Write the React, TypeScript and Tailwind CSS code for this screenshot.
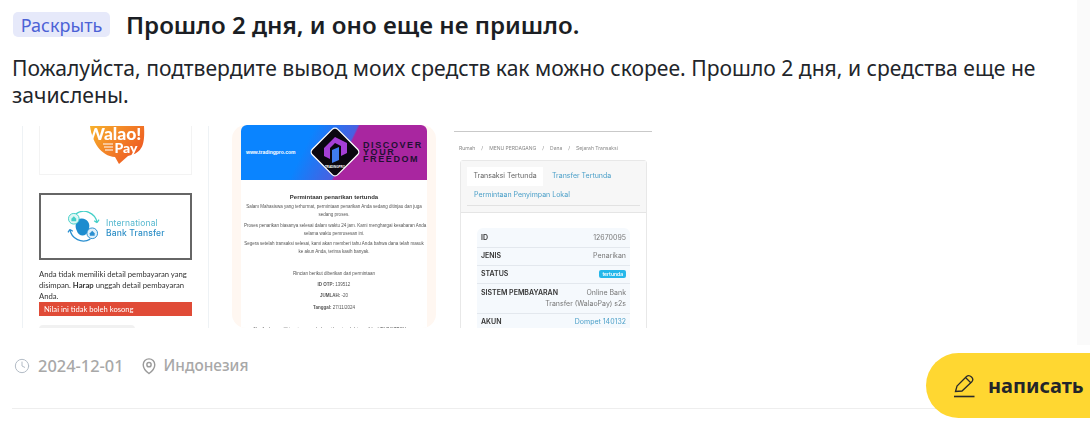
import React from 'react';
import { Clock } from 'lucide-react';

const sans = { fontFamily: '"Noto Sans", sans-serif' };

function WalaoTile() {
  return (
    <div className="w-[187px] h-[202px] shrink-0 overflow-hidden border-x border-[#eef2f5] px-[16px] font-['Lato']">
      <div className="h-[49px] border border-t-0 border-[#f3f3f3] flex justify-center overflow-hidden">
        <div className="relative w-[58px] h-[38px]">
          <svg viewBox="0 0 58 38" className="w-[58px] h-[38px]">
            <defs>
              <linearGradient id="walao" x1="0" y1="0" x2="1" y2="0.6">
                <stop offset="0" stopColor="#f7b12c" />
                <stop offset="1" stopColor="#ee5a22" />
              </linearGradient>
            </defs>
            <path d="M3 0 H57 C58 18 56 27 41 30 L32 38 L28 31 C14 30 5 16 3 0 Z" fill="url(#walao)" />
            <path d="M16 18 H26 M17 21 H26 M18 24 H26" stroke="#fff" strokeWidth="1.2" />
          </svg>
          <span className="absolute left-0 top-0 text-[17.5px] leading-[15px] font-black text-white whitespace-nowrap">Walao!</span>
          <span className="absolute left-[28px] top-[15px] text-[14px] leading-[13px] font-black text-white">Pay</span>
        </div>
      </div>
      <div className="mt-[18px] h-[67px] border-2 border-[#666] flex items-center pl-[26px] gap-[6px]">
        <svg viewBox="0 0 34 32" className="w-[33px] h-[31px]">
          <path d="M9 3 A14 14 0 0 1 31 12 M31 12 L28 10 M31 12 L33 9" fill="none" stroke="#45d0c8" strokeWidth="1.3" />
          <path d="M24 29 A14 14 0 0 1 3 19 M3 19 L1 22 M3 19 L6 21" fill="none" stroke="#2a8fd0" strokeWidth="1.3" />
          <path d="M11 9 C18 5 26 12 22 20 C20 27 12 27 10 20 C8 16 9 12 11 9 Z" fill="#1c8ccf" />
          <circle cx="7" cy="8" r="5.5" fill="#dff7f5" stroke="#45d0c8" />
          <path d="M4.5 8 L7 5.5 L9.5 8 V10.5 H4.5 Z" fill="#45d0c8" />
          <circle cx="26" cy="23" r="5.5" fill="#dff0fa" stroke="#2a8fd0" />
          <path d="M23.5 23 L26 20.5 L28.5 23 V25.5 H23.5 Z" fill="#2a8fd0" />
        </svg>
        <div className="mt-[2px] text-[8.5px] leading-[10px] tracking-[0.15px] whitespace-nowrap font-['Inter']">
          <div className="text-[#55b8cf]">International</div>
          <div className="font-medium text-[#2d8fc7]">Bank Transfer</div>
        </div>
      </div>
      <p className="mt-[9px] text-[7.7px] leading-[11px] text-[#333] whitespace-nowrap">
        Anda tidak memiliki detail pembayaran yang<br />
        disimpan. <span className="font-bold">Harap</span> unggah detail pembayaran<br />
        Anda.
      </p>
      <div className="h-[14px] bg-[#e04b37] text-white text-[7.6px] leading-[14px] pl-[5px]">Nilai ini tidak boleh kosong</div>
      <div className="mt-[9px] w-[96px] h-[8px] bg-[#f1f1f1] rounded-t" />
    </div>
  );
}

function EmailLine({ children, gap = 0 }: { children: React.ReactNode; gap?: number }) {
  return (
    <p className="text-center text-[#555] text-[4.5px] leading-[8px] whitespace-nowrap" style={{ marginTop: gap }}>
      {children}
    </p>
  );
}

function EmailTile() {
  return (
    <div className="w-[204px] h-[203px] shrink-0 overflow-hidden rounded-[14px] bg-[#fff7f1] px-[9px] ml-[23px] -mt-px font-['Liberation_Sans']">
      <div className="w-[186px] h-full bg-white rounded-t-[6px] overflow-hidden">
        <div className="relative h-[55px] flex items-center justify-between bg-[linear-gradient(116deg,#0a84ff_0%,#0a84ff_35%,#4a60e0_55%,#a926a0_56%,#a926a0_100%)] pl-[5px] pr-[4px]">
          <span className="text-[5px] font-bold text-white">www.tradingpro.com</span>
          <svg viewBox="0 0 54 54" className="absolute left-[67px] top-0 w-[54px] h-[54px]">
            <rect x="9" y="9" width="36" height="36" rx="4" transform="rotate(45 27 27)" fill="#0b0710" stroke="#fff" strokeWidth="1.3" />
            <path d="M16 23 L27 12 L39 18 V28 L33 31 V21 L27 18 L22 23 V34 L16 31 Z" fill="#a63fd6" />
            <path d="M24 25 L31 22 V35 L24 38 Z" fill="#3f7cf0" />
            <text x="27" y="42.5" textAnchor="middle" fontSize="3" fontWeight="700" fill="#fff">TRADINGPRO</text>
          </svg>
          <div className="w-[60px] text-[#221033] font-bold text-[9px] leading-[7px] tracking-[1.6px] whitespace-nowrap">
            <div>DISCOVER</div>
            <div>YOUR</div>
            <div>FREEDOM</div>
          </div>
        </div>
        <div className="px-[3px]">
          <p className="mt-[13px] text-center text-[6px] leading-[9px] font-bold text-[#333]">Permintaan penarikan tertunda</p>
          <EmailLine gap={1}>Salam Mahasiswa yang terhormat, permintaan penarikan Anda sedang ditinjau dan juga</EmailLine>
          <EmailLine>sedang proses.</EmailLine>
          <EmailLine gap={3}>Proses penarikan biasanya selesai dalam waktu 24 jam. Kami menghargai kesabaran Anda</EmailLine>
          <EmailLine>selama waktu pemrosesan ini.</EmailLine>
          <EmailLine gap={2}>Segera setelah transaksi selesai, kami akan memberi tahu Anda bahwa dana telah masuk</EmailLine>
          <EmailLine>ke akun Anda, terima kasih banyak.</EmailLine>
          <EmailLine gap={14}>Rincian berikut diberikan dari permintaan</EmailLine>
          <EmailLine gap={3}><b>ID OTP:</b> 139512</EmailLine>
          <EmailLine gap={3}><b>JUMLAH:</b> -20</EmailLine>
          <EmailLine gap={4}><b>Tanggal:</b> 27/11/2024</EmailLine>
          <EmailLine gap={14}>Jika Anda memiliki pertanyaan, hubungi kami melalui email ke HELP@TPGY.com</EmailLine>
        </div>
      </div>
    </div>
  );
}

function Row({ label, children, tall }: { label: string; children: React.ReactNode; tall?: boolean }) {
  if (tall) {
    return (
      <div className="h-[30px] px-[4px] pt-[3px] border-b border-[#e3e8ee] text-[7px] leading-[11px]">
        <span className="float-left font-semibold text-[#333] whitespace-nowrap">{label}</span>
        <div className="text-right text-[#777]">{children}</div>
      </div>
    );
  }
  return (
    <div className="flex h-[18px] items-center justify-between px-[4px] border-b border-[#e3e8ee] text-[7px]">
      <span className="font-semibold text-[#333] whitespace-nowrap">{label}</span>
      <div className="text-right text-[#777]">{children}</div>
    </div>
  );
}

function TransactionTile() {
  return (
    <div className="w-[198px] h-[202px] shrink-0 overflow-hidden ml-[18px] font-['Inter']">
      <div className="mt-[5px] h-px bg-[#c9c9c9]" />
      <div className="mt-[14px] pl-[5px] h-[6px] flex items-center gap-[6px] text-[5px] text-[#888] whitespace-nowrap">
        <span>Rumah</span><span>/</span><span>MENU PERDAGANG</span><span>/</span><span>Dana</span><span>/</span><span>Sejarah Transaksi</span>
      </div>
      <div className="mt-[8px] mx-[6px] w-[187px] border border-[#e8e8e8] rounded-t-[3px]">
        <div className="h-[52px] bg-[#f7f7f7] border-b border-[#e5e5e5] px-[6px] pt-[6px] text-[7px]">
          <div className="flex h-[19px]">
            <span className="w-[76px] bg-white text-[#666] flex items-center justify-center whitespace-nowrap">Transaksi Tertunda</span>
            <span className="ml-[9px] text-[#4a9fc8] flex items-center whitespace-nowrap">Transfer Tertunda</span>
          </div>
          <div className="h-[20px] border-b border-[#e2e2e2] text-[#4a9fc8] flex items-center pl-[7px] whitespace-nowrap">Permintaan Penyimpan Lokal</div>
        </div>
        <div className="mt-[15px] mx-[16px] bg-[#f5f9fd] rounded-t-[6px] overflow-hidden">
          <div className="h-[2px]" />
          <Row label="ID">12670095</Row>
          <Row label="JENIS">Penarikan</Row>
          <Row label="STATUS"><span className="bg-[#25b7ea] text-white text-[5px] px-[3px] py-[1px] rounded-[2px] font-semibold">tertunda</span></Row>
          <Row label="SISTEM PEMBAYARAN" tall>Online Bank Transfer (WalaoPay) s2s</Row>
          <Row label="AKUN"><span className="text-[#4a9fc8]">Dompet 140132</span></Row>
        </div>
      </div>
    </div>
  );
}

export default function App() {
  return (
    <div className="relative w-[1090px] h-[438px] bg-white overflow-hidden" style={sans}>
      {/* faint scrollbar track on the right edge */}
      <div className="absolute right-0 top-0 w-[13px] h-[345px] bg-[#fafafa]" />
      <div className="relative pl-[12px] pt-[12px]">
        <div className="flex items-start h-[28px]">
          <span className="ml-px w-[97px] h-[25px] rounded-[5px] bg-[#e6e9fa] text-[#4c62d6] text-[18px] leading-[27px] text-center">Раскрыть</span>
          <h1 className="ml-[16px] -mt-px text-[24.1px] leading-[28px] font-semibold text-[#1b1e24] whitespace-nowrap">Прошло 2 дня, и оно еще не пришло.</h1>
        </div>
        <p className="mt-[14px] w-[1040px] text-[21.1px] leading-[27px] text-[#22252a]">
          Пожалуйста, подтвердите вывод моих средств как можно скорее. Прошло 2 дня, и средства еще не зачислены.
        </p>
        <div className="mt-[18px] ml-[10px] flex items-start h-[202px] blur-[0.35px]">
          <WalaoTile />
          <EmailTile />
          <TransactionTile />
        </div>
        <div className="mt-[27px] flex items-center h-[22px] font-medium text-[#a8a8a8]">
          <Clock size={16} strokeWidth={1.5} className="text-[#b3bcc6] ml-[2px]" />
          <span className="ml-[8px] text-[16.4px]">2024-12-01</span>
          <svg viewBox="0 0 18 20" className="ml-[17px] w-[16px] h-[18px]" fill="none" stroke="#9a9a9a" strokeWidth="1.6">
            <path d="M9 18.5 C5 15.5 2.5 12 2.5 8.5 A6.5 6.5 0 0 1 15.5 8.5 C15.5 12 13 15.5 9 18.5 Z" />
            <circle cx="9" cy="8.5" r="2.4" />
          </svg>
          <span className="ml-[7px] text-[15.4px]">Индонезия</span>
        </div>
      </div>
      <div className="mt-[31px] ml-[12px] h-px bg-[#eeeeee]" />
      <button className="absolute left-[926px] top-[353px] w-[164px] h-[65px] rounded-l-full bg-[#ffd731] flex items-center pl-[27px] text-[#22252a]">
        <svg viewBox="0 0 22 24" className="w-[22px] h-[24px]" fill="none" stroke="#2a2a2a" strokeWidth="1.3">
          <path d="M2.5 17.5 L4 12 L13.5 2.5 C15 1.2 17 1.5 18.5 3 C20 4.5 20 6.5 18.8 7.8 L9 17 Z" />
          <path d="M12.5 3.5 L18 9" />
          <path d="M1 22.5 H21.5" strokeWidth="1.6" />
        </svg>
        <span className="ml-[13px] text-[20px] font-bold whitespace-nowrap">написать</span>
      </button>
    </div>
  );
}
